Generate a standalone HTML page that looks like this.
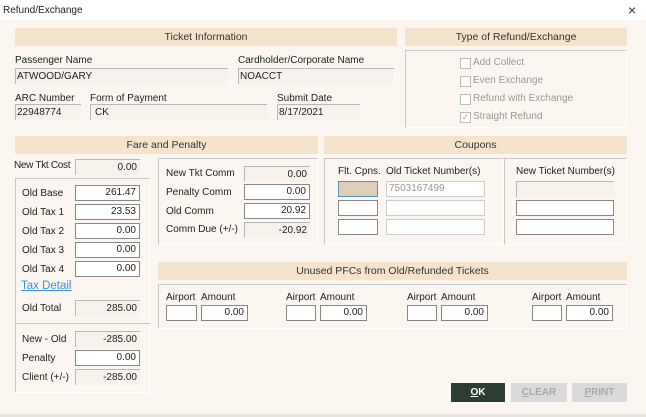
<!DOCTYPE html>
<html><head><style>
*{margin:0;padding:0;box-sizing:border-box}
body{width:646px;height:417px;background:#fcf6f0;font-family:"Liberation Sans",sans-serif;font-size:10px;color:#222;position:relative;overflow:hidden}
.a{position:absolute;white-space:nowrap}
.bar{position:absolute;background:#f6e3cb;height:18px;line-height:18px;text-align:center;color:#333;font-size:10.5px}
.f{position:absolute;height:16px;border:1px solid #888;background:#fff;text-align:right;padding-right:3px;line-height:14px}
.g{position:absolute;height:16px;border-top:1px solid #b8b8b8;border-left:1px solid #b8b8b8;background:#f8f2ec;line-height:15px;padding-left:1px}
.gr{text-align:right;padding-right:3px}
.box{position:absolute;border:1px solid #c8c8c8;border-right-color:#fff;border-bottom-color:#fff}
.cb{position:absolute;width:11px;height:11px;border:1px solid #bbb;background:#fff}
.ck{color:#999}
.btn{position:absolute;height:19px;line-height:19px;text-align:center;font-weight:bold;font-size:10px}
</style></head><body>
<div class="a" style="left:0;top:0;width:646px;height:20px;background:#fff"></div>
<div class="a" style="left:3px;top:5px;font-size:10px">Refund/Exchange</div>
<div class="a" style="left:628px;top:2px;font-size:14px;color:#333">×</div>

<div class="bar" style="left:15px;top:28px;width:382px">Ticket Information</div>
<div class="a" style="left:15px;top:55px">Passenger Name</div>
<div class="g" style="left:15px;top:68px;width:213px">ATWOOD/GARY</div>
<div class="a" style="left:238px;top:55px">Cardholder/Corporate Name</div>
<div class="g" style="left:238px;top:68px;width:156px">NOACCT</div>
<div class="a" style="left:15px;top:93px">ARC Number</div>
<div class="g" style="left:15px;top:104px;width:66px">22948774</div>
<div class="a" style="left:90px;top:93px">Form of Payment</div>
<div class="g" style="left:90px;top:104px;width:177px;padding-left:4px">CK</div>
<div class="a" style="left:277px;top:93px">Submit Date</div>
<div class="g" style="left:277px;top:104px;width:83px">8/17/2021</div>

<div class="bar" style="left:405px;top:28px;width:222px">Type of Refund/Exchange</div>
<div class="box" style="left:405px;top:50px;width:222px;height:78px"></div>
<div class="cb" style="left:460px;top:58px"></div><div class="a ck" style="left:473px;top:57px">Add Collect</div>
<div class="cb" style="left:460px;top:76px"></div><div class="a ck" style="left:473px;top:75px">Even Exchange</div>
<div class="cb" style="left:460px;top:94px"></div><div class="a ck" style="left:473px;top:93px">Refund with Exchange</div>
<div class="cb" style="left:460px;top:112px;font-size:9px;line-height:9px;color:#aaa;text-align:center">✓</div><div class="a ck" style="left:473px;top:111px">Straight Refund</div>

<div class="bar" style="left:15px;top:136px;width:303px">Fare and Penalty</div>
<div class="bar" style="left:324px;top:136px;width:303px">Coupons</div>

<div class="a" style="left:14px;top:160px;letter-spacing:-0.3px">New Tkt Cost</div>
<div class="g gr" style="left:75px;top:159px;width:65px">0.00</div>
<div class="box" style="left:15px;top:178px;width:135px;height:215px"></div>
<div class="a" style="left:22px;top:188px">Old Base</div><div class="f" style="left:75px;top:185px;width:65px">261.47</div>
<div class="a" style="left:22px;top:207px">Old Tax 1</div><div class="f" style="left:75px;top:204px;width:65px">23.53</div>
<div class="a" style="left:22px;top:226px">Old Tax 2</div><div class="f" style="left:75px;top:223px;width:65px">0.00</div>
<div class="a" style="left:22px;top:245px">Old Tax 3</div><div class="f" style="left:75px;top:242px;width:65px">0.00</div>
<div class="a" style="left:22px;top:264px">Old Tax 4</div><div class="f" style="left:75px;top:261px;width:65px">0.00</div>
<div class="a" style="left:21px;top:280px;color:#3a8ee6;text-decoration:underline;font-size:11.5px">Tax Detail</div>
<div class="a" style="left:22px;top:303px">Old Total</div><div class="g gr" style="left:75px;top:300px;width:65px">285.00</div>
<div class="a" style="left:15px;top:323px;width:135px;height:1px;background:#c8c8c8"></div>
<div class="a" style="left:22px;top:334px">New - Old</div><div class="g gr" style="left:75px;top:331px;width:65px">-285.00</div>
<div class="a" style="left:22px;top:353px">Penalty</div><div class="f" style="left:75px;top:350px;width:65px">0.00</div>
<div class="a" style="left:22px;top:372px">Client (+/-)</div><div class="g gr" style="left:75px;top:369px;width:65px">-285.00</div>

<div class="box" style="left:158px;top:158px;width:160px;height:87px"></div>
<div class="a" style="left:166px;top:168px">New Tkt Comm</div><div class="g gr" style="left:244px;top:166px;width:66px">0.00</div>
<div class="a" style="left:166px;top:187px">Penalty Comm</div><div class="f" style="left:244px;top:184px;width:66px">0.00</div>
<div class="a" style="left:166px;top:206px">Old Comm</div><div class="f" style="left:244px;top:203px;width:66px">20.92</div>
<div class="a" style="left:166px;top:224px">Comm Due (+/-)</div><div class="g gr" style="left:244px;top:222px;width:66px">-20.92</div>

<div class="box" style="left:324px;top:158px;width:180px;height:87px"></div>
<div class="box" style="left:504px;top:158px;width:123px;height:87px"></div>
<div class="a" style="left:338px;top:166px">Flt. Cpns.</div>
<div class="a" style="left:386px;top:166px">Old Ticket Number(s)</div>
<div class="a" style="left:516px;top:166px">New Ticket Number(s)</div>
<div class="f" style="left:338px;top:181px;width:40px;background:#e0cdb6;border-color:#5a8fd0"></div>
<div class="f" style="left:338px;top:200px;width:40px"></div>
<div class="f" style="left:338px;top:219px;width:40px"></div>
<div class="f" style="left:386px;top:181px;width:99px;border-color:#ccc;color:#999;text-align:left;padding-left:2px">7503167499</div>
<div class="f" style="left:386px;top:200px;width:99px;border-color:#ccc"></div>
<div class="f" style="left:386px;top:219px;width:99px;border-color:#ccc"></div>
<div class="g" style="left:516px;top:181px;width:98px"></div>
<div class="f" style="left:516px;top:200px;width:98px"></div>
<div class="f" style="left:516px;top:219px;width:98px"></div>

<div class="bar" style="left:158px;top:262px;width:469px">Unused PFCs from Old/Refunded Tickets</div>
<div class="box" style="left:158px;top:284px;width:469px;height:45px"></div>
<div class="a" style="left:166px;top:292px">Airport</div><div class="a" style="left:201px;top:292px">Amount</div>
<div class="f" style="left:166px;top:305px;width:31px"></div><div class="f" style="left:201px;top:305px;width:47px">0.00</div>
<div class="a" style="left:286px;top:292px">Airport</div><div class="a" style="left:320px;top:292px">Amount</div>
<div class="f" style="left:286px;top:305px;width:30px"></div><div class="f" style="left:320px;top:305px;width:47px">0.00</div>
<div class="a" style="left:407px;top:292px">Airport</div><div class="a" style="left:441px;top:292px">Amount</div>
<div class="f" style="left:407px;top:305px;width:30px"></div><div class="f" style="left:441px;top:305px;width:47px">0.00</div>
<div class="a" style="left:532px;top:292px">Airport</div><div class="a" style="left:566px;top:292px">Amount</div>
<div class="f" style="left:532px;top:305px;width:30px"></div><div class="f" style="left:566px;top:305px;width:47px">0.00</div>

<div class="btn" style="left:451px;top:383px;width:54px;background:#2e3d33;color:#fff"><u>O</u>K</div>
<div class="btn" style="left:511px;top:383px;width:56px;background:#dadada;color:#aaa"><u>C</u>LEAR</div>
<div class="btn" style="left:572px;top:383px;width:55px;background:#dadada;color:#aaa"><u>P</u>RINT</div>
<div class="a" style="left:0;top:414px;width:646px;height:3px;background:#e8e2dc"></div>
</body></html>
